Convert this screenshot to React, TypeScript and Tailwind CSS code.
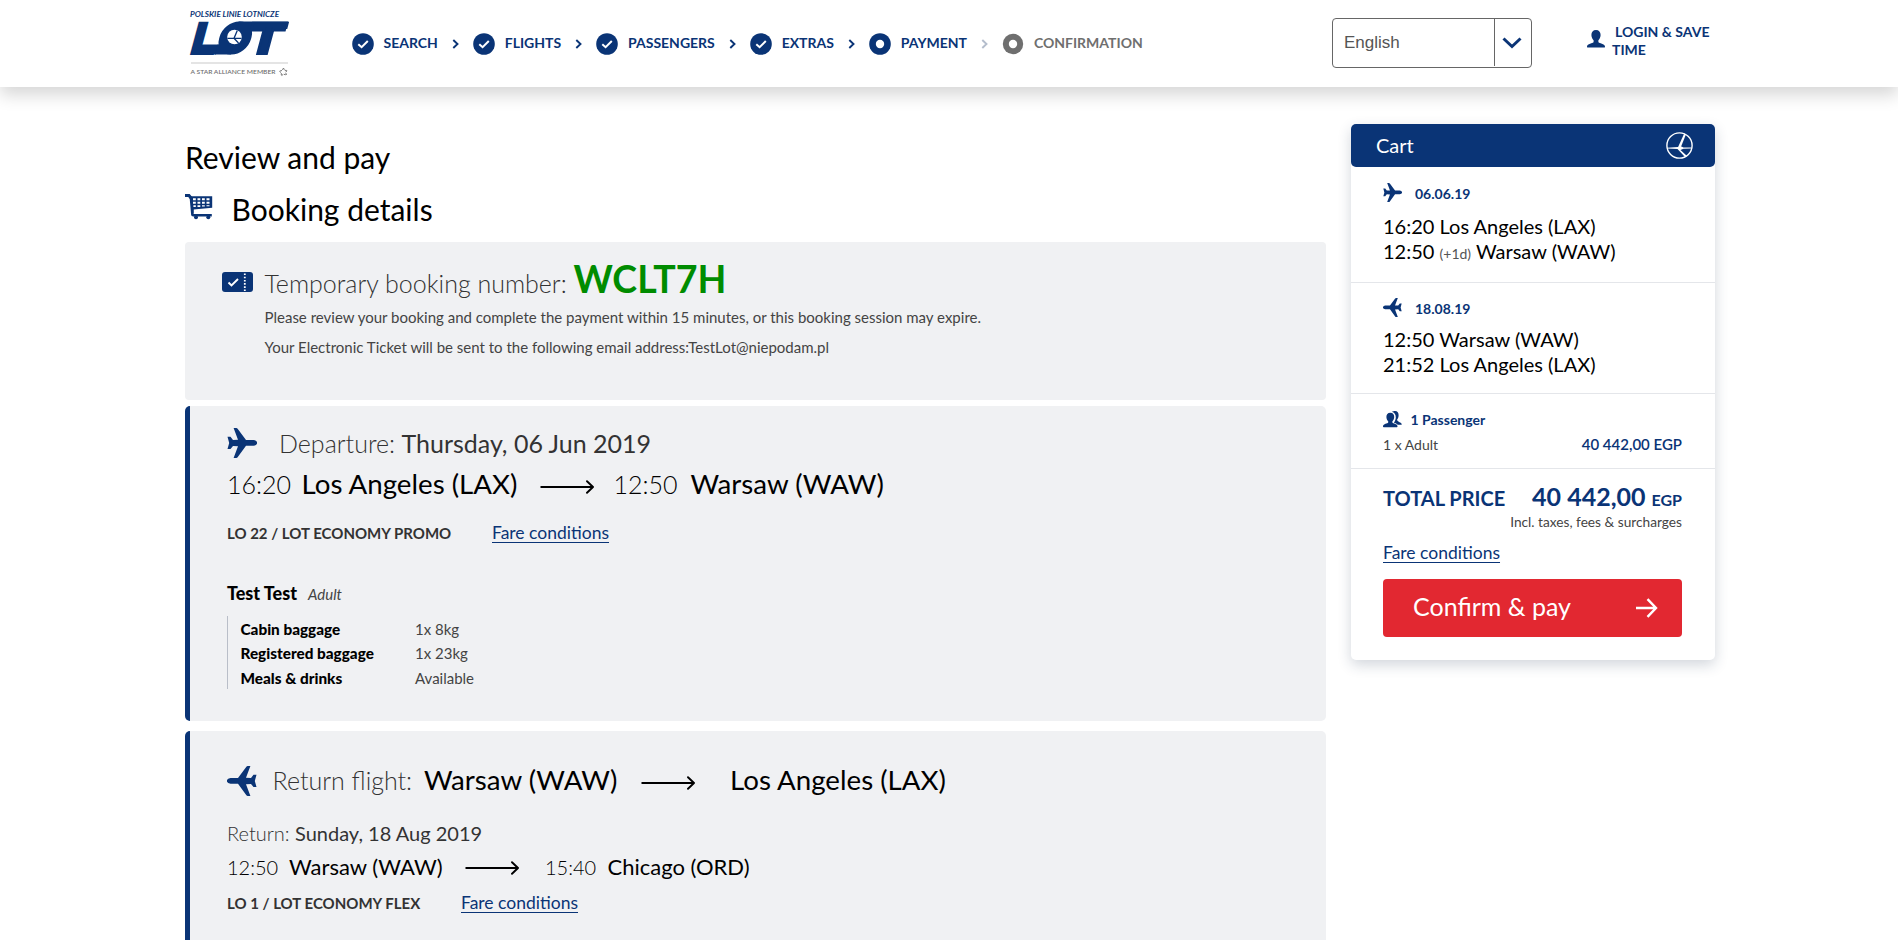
import React from "react";

const NAVY = "#0a3476";

function Plane({ size, flip = false }: { size: number; flip?: boolean }) {
  return (
    <svg width={size} height={size} viewBox="0 0 30 30" fill={NAVY} className={flip ? "shrink-0 -scale-x-100" : "shrink-0"}>
      <path d="M6.6 0h2.6q1 0 1.6.9L19 12h7.5q3.5.6 3.7 2.9-.2 2.3-3.7 2.9H19l-8.200 11.300q-.6.900-1.600.900H6.600L11 18.200l-5-.3-2.500 3.200H.5l1.700-6.200L.5 8.800h3L6 12l5-.3z" />
    </svg>
  );
}

function LongArrow() {
  return (
    <svg width="55" height="14" viewBox="0 0 55 14" fill="none" stroke="#000" strokeWidth="1.9" className="shrink-0">
      <path d="M.5 7H53" />
      <path d="M47 1.200 53 7l-6 5.800" strokeLinecap="round" strokeLinejoin="round" />
    </svg>
  );
}

function StepIcon({ kind }: { kind: "done" | "current" | "todo" }) {
  return (
    <svg width="22" height="22" viewBox="0 0 22 22" className="shrink-0">
      <circle cx="11" cy="11" r={kind === "todo" ? 10.2 : 10.8} fill={kind === "todo" ? "#6f6f6f" : NAVY} />
      {kind === "done" ? (
        <path d="M6.300 11.200 9.600 14.200 15.800 8" fill="none" stroke="#fff" strokeWidth="2" />
      ) : (
        <circle cx="11" cy="11" r="4.200" fill="#fff" />
      )}
    </svg>
  );
}

function Chevron({ muted }: { muted: boolean }) {
  return (
    <span className="flex w-[34.900px] shrink-0 items-center justify-center">
      <svg width="7" height="10" viewBox="0 0 7 10" fill="none" stroke={muted ? "#b4bdcc" : NAVY} strokeWidth="1.900">
        <path d="M1.300 1 5.500 5l-4.200 4" />
      </svg>
    </span>
  );
}

function CraneEmblem({ size, stroke }: { size: number; stroke: string }) {
  return (
    <svg width={size} height={size} viewBox="0 0 27 27" fill="none" stroke={stroke} className="shrink-0">
      <circle cx="13.500" cy="13.500" r="12.600" strokeWidth="1.400" />
      <path d="M1 15.800 12 15l3.500-.4 2 1 8-.2v1.200l-8 .2-3 1.200 6.500 6-2 1-7.500-8L1 16.600z" fill={stroke} stroke="none" />
      <path d="M18.300 1.300 12 15.300l2.700.2L19.700 3z" fill={stroke} stroke="none" />
    </svg>
  );
}

function Logo() {
  return (
    <svg width="120" height="80" viewBox="0 0 120 80" className="shrink-0 font-['Lato',sans-serif]">
      <text x="10" y="11.800" fontSize="6.800" fontWeight="700" fontStyle="italic" textLength="89" lengthAdjust="spacingAndGlyphs" fill={NAVY}>
        POLSKIE LINIE LOTNICZE
      </text>
      <g transform="translate(0 49) skewX(-15)" fill={NAVY} stroke={NAVY} fontWeight="900" fontSize="43">
        <text x="7.500" y="-.5" strokeWidth="2" textLength="26" lengthAdjust="spacingAndGlyphs">L</text>
        <rect x="35" y="-32.500" width="32" height="33" rx="15.500" stroke="none" />
        <rect x="11" y="-9.500" width="25" height="10" stroke="none" />
        <rect x="35" y="-9.500" width="16" height="10" stroke="none" />
        <rect x="50" y="-32.500" width="49.500" height="10" stroke="none" />
        <text x="64" y="-.5" strokeWidth="2" textLength="36" lengthAdjust="spacingAndGlyphs">T</text>
      </g>
      <circle cx="54.500" cy="32" r="7.300" fill="#fff" />
      <path d="M47.500 33.300h6.500l3.300-7.800M54 33.300l4.500 4.700M54 33.300h7.500" fill="none" stroke={NAVY} strokeWidth="1.300" />
      <path d="M11 58h97" stroke="#c9c9c9" strokeWidth="1.200" />
      <text x="10.500" y="69.200" fontSize="6" fontWeight="500" textLength="85" lengthAdjust="spacingAndGlyphs" fill="#6a6a6a">
        A STAR ALLIANCE MEMBER
      </text>
      <path d="m103.500 63 1 2.300 2.700.2-1.600 1.800.9 2.700-2.900-.8-2.300 1.500v-2.800l-2-1.700 2.700-.7z" fill="none" stroke="#777" strokeWidth="1" strokeDasharray="2 .8" />
    </svg>
  );
}

const steps: { label: string; kind: "done" | "current" | "todo" }[] = [
  { label: "SEARCH", kind: "done" },
  { label: "FLIGHTS", kind: "done" },
  { label: "PASSENGERS", kind: "done" },
  { label: "EXTRAS", kind: "done" },
  { label: "PAYMENT", kind: "current" },
  { label: "CONFIRMATION", kind: "todo" },
];

function Header() {
  return (
    <header className="flex h-[88px] bg-white shadow-[0_8px_16px_rgba(0,0,0,0.16)]">
      <div className="w-[351.500px] shrink-0 pl-[180px] pt-[5px]">
        <Logo />
      </div>
      <nav className="flex h-[87px] w-[980.500px] shrink-0 items-center text-[14px] font-bold leading-[20px] text-[#0a3476]">
        {steps.map((s, i) => (
          <React.Fragment key={s.label}>
            {i > 0 && <Chevron muted={s.kind === "todo"} />}
            <span className={s.kind === "todo" ? "flex items-center gap-[10px] text-[#6f6f6f]" : "flex items-center gap-[10px]"}>
              <StepIcon kind={s.kind} />
              <span className="-mt-px">{s.label}</span>
            </span>
          </React.Fragment>
        ))}
      </nav>
      <div className="mt-[18px] flex h-[50px] w-[200px] shrink-0 rounded-[4px] border border-[#666]">
        <span className="flex-1 pl-[11px] font-['Liberation_Sans',sans-serif] text-[17px] leading-[47px] text-[#555]">English</span>
        <span className="flex h-[47px] w-[37px] items-center justify-center border-l border-[#666]">
          <svg width="20" height="14" viewBox="0 0 20 14" fill="none" stroke={NAVY} strokeWidth="3" className="-ml-[2px]">
            <path d="m1.500 2.500 8.500 8 8.500-8" />
          </svg>
        </span>
      </div>
      <div className="ml-[55px] flex pt-[23px]">
        <svg width="18" height="18" viewBox="0 0 18 18" fill={NAVY} className="mt-[7px]">
          <path d="M9 0c3 0 4.600 2 4.600 5 0 2.200-1 4.300-2.200 5.300v2c.8 1 6.300 1.500 6.600 4.200.1.900-.3 1-1 1H1c-.7 0-1.100-.1-1-1 .3-2.700 5.800-3.200 6.600-4.200v-2C5.400 9.300 4.400 7.200 4.400 5 4.400 2 6 0 9 0z" />
        </svg>
        <p className="ml-[7px] w-[110px] text-[14px] font-bold leading-[18px] text-[#0a3476]">
          <span className="ml-[3px] whitespace-nowrap">LOGIN &amp; SAVE</span>
          <br />
          TIME
        </p>
      </div>
    </header>
  );
}

function FareLink() {
  return (
    <a className="text-[17.500px] text-[#0a3476] underline decoration-1 underline-offset-[3px] [text-decoration-skip-ink:none]">Fare conditions</a>
  );
}

const baggage = [
  ["Cabin baggage", "1x 8kg"],
  ["Registered baggage", "1x 23kg"],
  ["Meals & drinks", "Available"],
];

function Main() {
  return (
    <main className="w-[1141px] shrink-0 whitespace-nowrap pt-[52px]">
      <h1 className="h-9 text-[30px] leading-9">Review and pay</h1>
      <div className="mt-[15px] flex h-9">
        <svg width="28" height="26" viewBox="0 0 28 26" className="mt-[4px] shrink-0" fill="none" stroke={NAVY}>
          <path d="M0 1.500h4l2 2.500" strokeWidth="3" />
          <path d="M4.500 2.200h22.700V13.800L8.500 15.500v4H6z" fill={NAVY} stroke="none" />
          <path d="M8 4.200h2.800v2H8zM12.500 4.200h2.800v2h-2.800zM17 4.200h2.800v2H17zM21.500 4.200h3v2h-3zM8 7.700h2.800v2H8zM12.500 7.700h2.800v2h-2.800zM17 7.700h2.800v2H17zM21.500 7.700h3v2h-3zM8.400 11.200h2.400v1.900H8.400zM12.500 11.200h2.800v1.700h-2.800zM17 11.200h2.800v1.400H17zM21.500 11.200h3v1h-3z" fill="#fff" stroke="none" />
          <path d="M7.300 15v5.500q0 .8 1 .8h18.500" strokeWidth="2.500" />
          <circle cx="11" cy="23.300" r="2" fill={NAVY} stroke="none" />
          <circle cx="23.300" cy="23.300" r="2" fill={NAVY} stroke="none" />
        </svg>
        <h2 className="ml-[18.500px] pt-[0.600px] text-[30px] leading-9">Booking details</h2>
      </div>

      <section className="mt-[16px] flex h-[158px] rounded-[4px] bg-[#f0f1f3] pl-[37px] pt-[15px]">
        <svg width="31" height="20" viewBox="0 0 31 20" className="mt-[15px] shrink-0">
          <rect width="31" height="20" rx="3" fill={NAVY} />
          <path d="m6.500 10.500 3 3 6.500-6.500" fill="none" stroke="#fff" strokeWidth="1.900" />
          <path d="M22.800 1.500v17.500" stroke="#fff" strokeWidth="1.800" strokeDasharray="1.600 1.600" />
        </svg>
        <div className="ml-[11.500px]">
          <div className="flex h-[44px] items-baseline leading-[44px]">
            <span className="w-[309px] text-[25px] font-light text-[#333]">Temporary booking number:</span>
            <span className="text-[37.500px] font-bold text-[#008c00]">WCLT7H</span>
          </div>
          <p className="mt-px text-[15px] leading-[30px] text-[#444]">
            Please review your booking and complete the payment within 15 minutes, or this booking session may expire.
          </p>
          <p className="text-[15px] leading-[30px] text-[#444]">Your Electronic Ticket will be sent to the following email address:TestLot@niepodam.pl</p>
        </div>
      </section>

      <section className="mt-[6px] h-[315px] rounded-[5px] border-l-[5px] border-[#0a3476] bg-[#f0f1f3] pl-[37px] pt-[22px]">
        <div className="flex h-[30px] text-[25px] leading-[30px] text-[#333]">
          <span className="w-[52px]">
            <Plane size={30} />
          </span>
          <span className="w-[122.500px] font-light">Departure:</span>
          <span>Thursday, 06 Jun 2019</span>
        </div>
        <div className="mt-[6px] flex h-[40px] items-baseline text-[27.700px] leading-[40px] text-black">
          <span className="w-[74.500px] text-[25px] font-light">16:20</span>
          <span className="w-[238px]">Los Angeles (LAX)</span>
          <span className="w-[74px]">
            <LongArrow />
          </span>
          <span className="w-[77px] text-[25px] font-light">12:50</span>
          <span>Warsaw (WAW)</span>
        </div>
        <div className="mt-[17px] flex h-6 items-baseline leading-6">
          <span className="w-[265px] text-[15px] font-bold text-[#333]">LO 22 / LOT ECONOMY PROMO</span>
          <FareLink />
        </div>
        <div className="mt-[36px] flex h-6 items-baseline leading-6">
          <span className="w-[81px] text-[18px] font-black text-black">Test Test</span>
          <span className="text-[15px] italic text-[#444]">Adult</span>
        </div>
        <dl className="mt-[11px] h-[73px] border-l border-[#b9bec8] pl-[12.500px] pt-px text-[15px] leading-[24.300px]">
          {baggage.map(([k, v]) => (
            <div key={k} className="flex">
              <dt className="w-[174.500px] text-[15.300px] font-black text-black">{k}</dt>
              <dd className="text-[#444]">{v}</dd>
            </div>
          ))}
        </dl>
      </section>

      <section className="mt-[10px] h-[315px] rounded-[5px] border-l-[5px] border-[#0a3476] bg-[#f0f1f3] pl-[37px] pt-[29px]">
        <div className="flex h-[40px] items-baseline text-[27.700px] leading-[40px] text-black">
          <span className="w-[45.500px] self-start pt-[6px]">
            <Plane size={30} flip />
          </span>
          <span className="w-[151.500px] text-[25px] font-light text-[#333]">Return flight:</span>
          <span className="w-[216.500px]">Warsaw (WAW)</span>
          <span className="w-[89.500px]">
            <LongArrow />
          </span>
          <span>Los Angeles (LAX)</span>
        </div>
        <div className="mt-[19px] flex h-7 text-[20px] leading-7 text-[#333]">
          <span className="w-[68px] font-light">Return:</span>
          <span>Sunday, 18 Aug 2019</span>
        </div>
        <div className="mt-[6px] flex h-7 items-baseline text-[22px] leading-7 text-black">
          <span className="w-[62px] text-[20px] font-light">12:50</span>
          <span className="w-[176px]">Warsaw (WAW)</span>
          <span className="w-[80px]">
            <LongArrow />
          </span>
          <span className="w-[62.500px] text-[20px] font-light">15:40</span>
          <span>Chicago (ORD)</span>
        </div>
        <div className="mt-[10px] flex h-6 items-baseline leading-6">
          <span className="w-[234px] text-[15px] font-bold text-[#333]">LO 1 / LOT ECONOMY FLEX</span>
          <FareLink />
        </div>
      </section>
    </main>
  );
}

function Cart() {
  return (
    <aside className="mt-[37px] ml-[25px] h-[536px] w-[364px] shrink-0 whitespace-nowrap rounded-[5px] bg-white text-[20px] text-black shadow-[0_5px_14px_rgba(30,50,80,0.2)]">
      <div className="flex h-[43px] items-center justify-between rounded-[5px] bg-[#0a3476] pl-[25px] pr-[22px] text-white">
        <span className="-mt-[2px] leading-[24px]">Cart</span>
        <CraneEmblem size={27} stroke="#fff" />
      </div>
      <div className="border-b border-[#e4e6ea] pb-[16px] pl-8 pt-[17px]">
        <div className="flex h-5 text-[14px] font-bold leading-5 text-[#0a3476]">
          <span className="-mt-px w-[32px]">
            <Plane size={19} />
          </span>
          06.06.19
        </div>
        <p className="mt-[10px] leading-[25px]">16:20 Los Angeles (LAX)</p>
        <p className="leading-[25px]">
          12:50 <span className="text-[14px] text-[#555]">(+1d)</span> Warsaw (WAW)
        </p>
      </div>
      <div className="border-b border-[#e4e6ea] pb-[16px] pl-8 pt-[16px]">
        <div className="flex h-5 text-[14px] font-bold leading-5 text-[#0a3476]">
          <span className="-mt-px w-[32px]">
            <Plane size={19} flip />
          </span>
          18.08.19
        </div>
        <p className="mt-[8px] leading-[25px]">12:50 Warsaw (WAW)</p>
        <p className="leading-[25px]">21:52 Los Angeles (LAX)</p>
      </div>
      <div className="border-b border-[#e4e6ea] pb-[14px] pl-8 pr-[33px] pt-4">
        <div className="flex h-5 text-[14px] font-bold leading-5 text-[#0a3476]">
          <svg width="19" height="17" viewBox="0 0 19 17" fill={NAVY} className="mr-[8.500px] mt-px shrink-0">
            <path d="M8.800.8C10 .1 11 0 12 0c2.600 0 3.600 1.800 3.600 4.200 0 1.800-.6 3.400-1.500 4.300.1 2.700 4 2.400 4.700 4.600.1.500-.1.700-.6.700h-3.500c-1-1.500-3-1.700-3.800-2.300 1.200-1.400 1.900-3.300 1.900-5.300 0-2.800-1.300-4.800-4-5.400z" />
            <path d="M7.300 1.700c2.700 0 3.900 1.800 3.900 4.300 0 1.800-.8 3.500-1.800 4.300v1.300c.6 1.300 4.700 1 5.100 3.600.1.800-.1 1-.7 1H.7c-.6 0-.8-.2-.7-1 .4-2.500 4.500-2.300 5.200-3.600v-1.300C4.200 9.500 3.400 7.800 3.400 6c0-2.500 1.200-4.300 3.900-4.300z" />
          </svg>
          1 Passenger
        </div>
        <div className="mt-1 flex h-5 items-baseline justify-between text-[14px] leading-5 text-[#444]">
          <span>1 x Adult</span>
          <span className="text-[15px] font-semibold text-[#0a3476]">40 442,00 EGP</span>
        </div>
      </div>
      <div className="pl-8 pr-[33px] pt-[12px]">
        <div className="flex h-[30px] items-baseline font-bold leading-[30px] text-[#0a3476]">
          <span>TOTAL PRICE</span>
          <span className="ml-auto text-[25px]">40 442,00</span>
          <span className="ml-[6px] text-[16px]">EGP</span>
        </div>
        <p className="mt-px text-right text-[13.700px] leading-5 text-[#444]">Incl. taxes, fees &amp; surcharges</p>
        <div className="mt-[9px] flex h-6 items-baseline leading-6">
          <FareLink />
        </div>
        <button className="mt-[14px] flex h-[58px] w-[299px] items-center justify-between rounded-[4px] bg-[#e22831] pl-[30px] pr-[24px] text-[25px] leading-[30px] text-white">
          <span className="-mt-[4px]">Confirm &amp; pay</span>
          <svg width="22" height="20" viewBox="0 0 22 20" fill="none" stroke="#fff" strokeWidth="2.400">
            <path d="M0 10h20M11.500 1.200 20 10l-8.500 8.800" />
          </svg>
        </button>
      </div>
    </aside>
  );
}

export default function App() {
  return (
    <div className="flex h-[940px] w-[1898px] flex-col overflow-hidden bg-white font-['Lato',sans-serif] text-black">
      <Header />
      <div className="flex pl-[185px]">
        <Main />
        <Cart />
      </div>
    </div>
  );
}
